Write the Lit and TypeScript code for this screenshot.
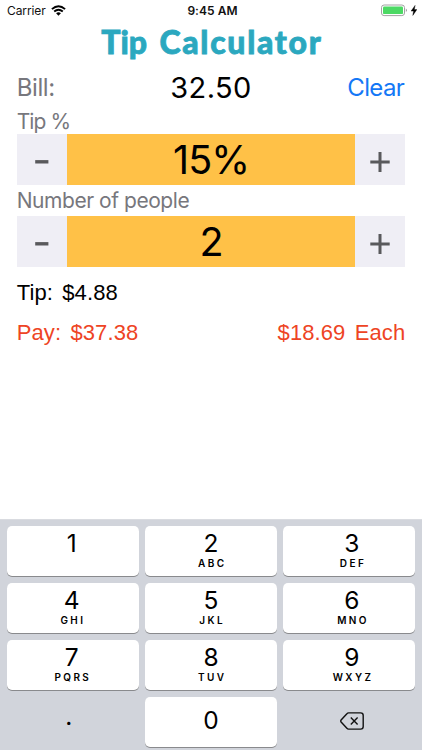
import { LitElement, html, css, nothing } from "lit";
import { customElement, property } from "lit/decorators.js";

interface Key {
  digit: string;
  letters?: string;
}

const KEYS: Key[] = [
  { digit: "1" },
  { digit: "2", letters: "ABC" },
  { digit: "3", letters: "DEF" },
  { digit: "4", letters: "GHI" },
  { digit: "5", letters: "JKL" },
  { digit: "6", letters: "MNO" },
  { digit: "7", letters: "PQRS" },
  { digit: "8", letters: "TUV" },
  { digit: "9", letters: "WXYZ" },
];

@customElement("status-bar")
export class StatusBar extends LitElement {
  static styles = css`
    :host {
      display: grid;
      grid-template-columns: 1fr auto 1fr;
      height: 22px;
      padding: 0 5px 0 7px;
      box-sizing: border-box;
      font: 12px/22px Inter, sans-serif;
      color: #111;
    }
    .left, .right {
      display: flex;
      align-items: flex-start;
    }
    .carrier {
      letter-spacing: -0.1px;
      margin-right: 5px;
    }
    .time {
      font-weight: 600;
      letter-spacing: 0.05px;
      padding-left: 1px;
    }
    .right {
      justify-content: flex-end;
    }
    svg {
      display: block;
    }
    .wifi {
      margin-top: 5px;
    }
    .battery {
      margin-top: 4px;
    }
    .bolt {
      margin: 5px 0 0 4px;
    }
  `;

  render() {
    return html`
      <div class="left">
        <span class="carrier">Carrier</span>
        <svg class="wifi" width="15" height="11" viewBox="0 0 15 11">
          <g fill="none" stroke="#000" stroke-width="1.9">
            <path d="M0.9 4.1Q7.5 -1.8 14.1 4.1" />
            <path d="M3.2 6.5Q7.5 2.9 11.8 6.5" />
          </g>
          <path d="M5.1 8.2Q7.5 6.5 9.9 8.2L7.5 10.7Z" />
        </svg>
      </div>
      <span class="time">9:45 AM</span>
      <div class="right">
        <svg class="battery" width="26" height="13" viewBox="0 0 26 13">
          <rect x="0.5" y="1" width="23" height="10.6" rx="2.6" fill="#fff" stroke="#a2a2a2" />
          <rect x="2" y="2.5" width="20" height="7.6" rx="1.2" fill="#4cd964" />
          <path d="M24.8 4.6Q26 5.2 26 6.3T24.8 8Z" fill="#a2a2a2" />
        </svg>
        <svg class="bolt" width="6" height="11" viewBox="0 0 6 11">
          <path d="M4.1 0.4L0.1 6.1H2.6L1.8 10.4L5.9 4.6H3.3Z" stroke="#000" stroke-width="0.4" />
        </svg>
      </div>
    `;
  }
}

@customElement("value-stepper")
export class ValueStepper extends LitElement {
  @property() value = "";

  static styles = css`
    :host {
      display: grid;
      grid-template-columns: 50.5px 1fr 50.5px;
      height: 51px;
    }
    .button {
      display: flex;
      align-items: center;
      justify-content: center;
      padding: 5px 0 0;
      border: 0;
      background: #efeef5;
    }
    .value {
      background: #ffc147;
      font: 39.5px/52px Inter, sans-serif;
      height: 51px;
      letter-spacing: -1px;
      text-align: center;
      color: #000;
    }
    svg {
      display: block;
    }
  `;

  render() {
    return html`
      <button class="button" aria-label="Decrease">
        <svg width="20" height="20" viewBox="0 0 20 20">
          <path d="M3.2 9.8H16.4" stroke="#59595c" stroke-width="3.4" />
        </svg>
      </button>
      <div class="value">${this.value}</div>
      <button class="button" aria-label="Increase">
        <svg width="20" height="20" viewBox="0 0 20 20">
          <path d="M0.3 10H19.7M10 0V20" stroke="#59595c" stroke-width="3" />
        </svg>
      </button>
    `;
  }
}

@customElement("number-pad")
export class NumberPad extends LitElement {
  static styles = css`
    :host {
      display: grid;
      grid-template-columns: repeat(3, 1fr);
      grid-auto-rows: 50px;
      gap: 7px 6px;
      height: 231px;
      box-sizing: border-box;
      padding: 5.6px 6.5px 0;
      background: #d1d4db;
      border-top: 1px solid #d9dbe0;
      overflow: hidden;
      font-family: Inter, sans-serif;
      color: #000;
    }
    .key {
      display: flex;
      flex-direction: column;
      align-items: center;
      padding: 5px 0 0;
      border: 0;
      border-radius: 5px;
      background: #fff;
      box-shadow: 0 1px 0 #898a8d;
      font-family: inherit;
      color: inherit;
    }
    .key:nth-child(3n + 1) {
      padding-right: 2px;
    }
    .key:nth-child(3n) {
      padding-left: 5px;
    }
    .digit {
      font-size: 24.5px;
      line-height: 25px;
    }
    .letters {
      font-size: 10px;
      font-weight: 600;
      line-height: 14px;
      letter-spacing: 2.4px;
      margin-right: -2.4px;
    }
    .key.zero {
      padding-top: 11px;
    }
    .key.flat {
      background: none;
      box-shadow: none;
    }
    .key.point {
      padding: 7px 8px 0 0;
    }
    .key.back {
      padding-top: 15px;
    }
    svg {
      display: block;
    }
  `;

  render() {
    return html`
      ${KEYS.map(
        (k) => html`
          <button class="key">
            <span class="digit">${k.digit}</span>
            ${k.letters ? html`<span class="letters">${k.letters}</span>` : nothing}
          </button>
        `,
      )}
      <button class="key flat point"><span class="digit">.</span></button>
      <button class="key zero"><span class="digit">0</span></button>
      <button class="key flat back" aria-label="Delete">
        <svg width="24" height="18" viewBox="0 0 24 18" fill="none" stroke="#111">
          <path
            d="M8.6 0.9H20.6Q23.2 0.9 23.2 3.5V14.5Q23.2 17.1 20.6 17.1H8.6Q7.6 17.1 6.9 16.3L1.1 10Q0.4 9 1.1 8L6.9 1.7Q7.6 0.9 8.6 0.9Z"
            stroke-width="1.4"
          />
          <path d="M10.8 5.6L17.6 12.4M17.6 5.6L10.8 12.4" stroke-width="1.4" />
        </svg>
      </button>
    `;
  }
}

@customElement("app-root")
export class AppRoot extends LitElement {
  static styles = css`
    :host {
      display: flex;
      flex-direction: column;
      width: 422px;
      height: 750px;
      overflow: hidden;
      background: #fff;
      font-family: Inter, sans-serif;
    }
    .title {
      display: flex;
      justify-content: center;
      gap: 12.5px;
      margin: 0;
      height: 41px;
      font: 900 32px/40px Lato, sans-serif;
      color: #2ba8bf;
      -webkit-text-stroke: 0.8px #2ba8bf;
    }
    .wide {
      letter-spacing: 1.7px;
      margin-right: -1.7px;
    }
    .form {
      flex: 1;
      padding: 0 16.7px;
    }
    .bill {
      display: grid;
      grid-template-columns: 1fr auto 1fr;
      height: 47px;
      line-height: 49px;
    }
    .label {
      font-size: 24px;
      letter-spacing: -0.4px;
      color: #77777d;
    }
    .amount {
      font-size: 29px;
      letter-spacing: 0.4px;
      color: #000;
    }
    .clear {
      font-size: 24px;
      letter-spacing: -0.6px;
      text-align: right;
      padding-right: 1px;
      color: #1478f6;
    }
    .caption {
      font-size: 21px;
      line-height: 24px;
      letter-spacing: -0.5px;
      color: #77777d;
    }
    .tip-caption {
      letter-spacing: -0.9px;
    }
    .people-caption {
      padding: 3.7px 0 3px;
      letter-spacing: -0.45px;
    }
    .result {
      display: flex;
      justify-content: space-between;
      font: 22px/40px "Liberation Sans", sans-serif;
      letter-spacing: 0.1px;
      word-spacing: 3.1px;
      color: #000;
    }
    .tip {
      margin-top: 6.5px;
    }
    .due {
      height: 39px;
      line-height: 39px;
      color: #ee4424;
    }
  `;

  render() {
    return html`
      <status-bar></status-bar>
      <h1 class="title"><span>Tip</span><span class="wide">Calculator</span></h1>
      <div class="form">
        <div class="bill">
          <span class="label">Bill:</span>
          <span class="amount">32.50</span>
          <span class="clear">Clear</span>
        </div>
        <div class="caption tip-caption">Tip %</div>
        <value-stepper value="15%"></value-stepper>
        <div class="caption people-caption">Number of people</div>
        <value-stepper value="2"></value-stepper>
        <div class="result tip"><span>Tip: $4.88</span></div>
        <div class="result due"><span>Pay: $37.38</span><span>$18.69 Each</span></div>
      </div>
      <number-pad></number-pad>
    `;
  }
}
